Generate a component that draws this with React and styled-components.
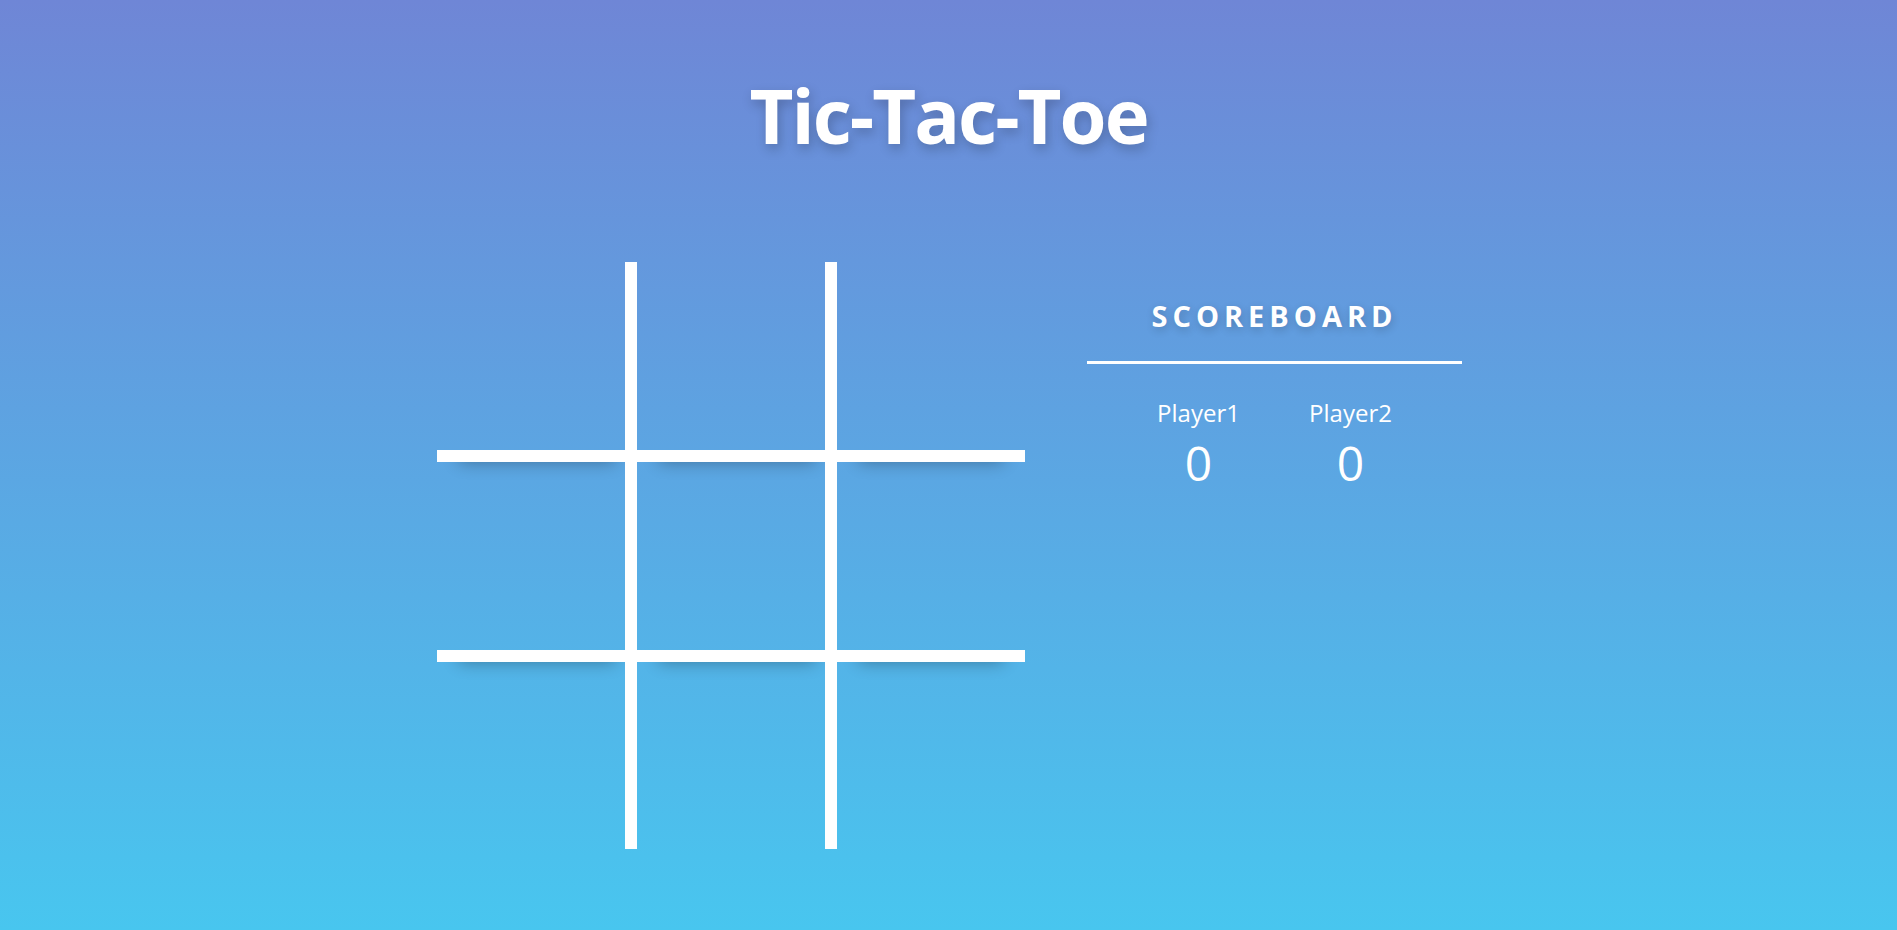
import styled, { createGlobalStyle } from 'styled-components'

const GlobalStyle = createGlobalStyle`
    * {
        box-sizing: border-box;
    }

    body {
        margin: 0;
        font-family: "Open Sans", "Noto Sans", sans-serif;
    }
`

const cells = [0, 1, 2, 3, 4, 5, 6, 7, 8]
const players = [
    { name: 'Player1', score: 0 },
    { name: 'Player2', score: 0 },
]

const App = () => {
    return (
        <Page>
            <GlobalStyle />
            <Title>Tic-Tac-Toe</Title>
            <Main>
                <Board>
                    {cells.map((i) => (
                        <Cell key={i} $right={i % 3 < 2} $bottom={i < 6} />
                    ))}
                </Board>
                <Scoreboard>
                    <ScoreTitle>Scoreboard</ScoreTitle>
                    <Players>
                        {players.map((p) => (
                            <PlayerCol key={p.name}>
                                <PlayerName>{p.name}</PlayerName>
                                <Score>{p.score}</Score>
                            </PlayerCol>
                        ))}
                    </Players>
                </Scoreboard>
            </Main>
        </Page>
    )
}

export default App

const Page = styled.div`
    min-height: 100vh;
    display: flex;
    flex-direction: column;
    align-items: center;
    background: linear-gradient(to top, #48c6ef 0%, #6f86d6 100%);
    color: #fff;
`

const Title = styled.h1`
    margin: 0;
    padding-top: 77px;
    font-size: 76px;
    line-height: 1;
    font-weight: 700;
    letter-spacing: -2px;
    text-shadow: 2px 5px 12px rgba(0, 0, 0, 0.22);
`

const Main = styled.div`
    display: flex;
    align-items: flex-start;
    gap: 62px;
    margin-top: 109px;
    padding-left: 2px;
`

const Board = styled.div`
    display: grid;
    grid-template-columns: 200px 200px 188px;
    grid-template-rows: 200px 200px 187px;
`

const Cell = styled.div`
    border-right: ${(p) => (p.$right ? '12px solid #fff' : 'none')};
    border-bottom: ${(p) => (p.$bottom ? '12px solid #fff' : 'none')};
    box-shadow: ${(p) => (p.$bottom ? '0 22px 16px -22px rgba(0, 0, 0, 0.32)' : 'none')};
    cursor: pointer;
`

const Scoreboard = styled.div`
    width: 375px;
    margin-top: 39px;
    display: flex;
    flex-direction: column;
    align-items: center;
`

const ScoreTitle = styled.h2`
    width: 100%;
    margin: 0;
    padding-bottom: 31px;
    border-bottom: 3px solid #fff;
    text-align: center;
    text-transform: uppercase;
    font-size: 29px;
    line-height: 1;
    font-weight: 700;
    letter-spacing: 5px;
    text-shadow: 1px 3px 8px rgba(0, 0, 0, 0.2);
`

const Players = styled.div`
    display: flex;
    justify-content: center;
    margin-top: 37px;
`

const PlayerCol = styled.div`
    width: 152px;
    display: flex;
    flex-direction: column;
    align-items: center;
`

const PlayerName = styled.span`
    font-size: 24px;
    line-height: 1;
`

const Score = styled.span`
    margin-top: 14px;
    font-size: 48px;
    line-height: 1;
`
